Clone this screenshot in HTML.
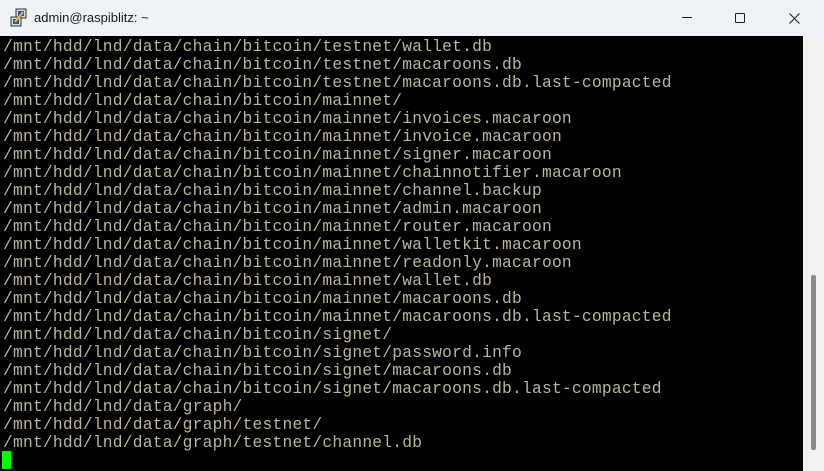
<!DOCTYPE html>
<html><head><style>
body{margin:0;width:824px;height:471px;overflow:hidden;background:#f0f4f9;position:relative;font-family:"Liberation Sans",sans-serif}
#tb{position:absolute;left:0;top:0;width:824px;height:36px;background:#eff3f8}
#title{position:absolute;left:34px;top:10px;font-size:13px;color:#1a1a1a}
#term{position:absolute;left:0;top:36px;width:803px;height:435px;background:#000}
pre{margin:0;position:absolute;left:3px;top:2px;font-family:"Liberation Mono",monospace;font-size:16.27px;line-height:18px;color:#bcb49c;letter-spacing:0.22px}
#cur{position:absolute;left:2px;top:451px;width:9px;height:18px;background:#00ff00}
#sb{position:absolute;left:803px;top:36px;width:21px;height:435px;background:#f2f2f2}
#th{position:absolute;left:811px;top:275px;width:5px;height:175px;background:#8a8a8a;border-radius:2px}
</style></head><body>
<div id="tb">
<svg style="position:absolute;left:10px;top:8px" width="18" height="20" viewBox="0 0 18 20">
<rect x="6" y="1" width="10" height="9" fill="#d8d8e8" stroke="#333"/>
<rect x="8" y="3" width="6" height="5" fill="#3050a0"/>
<rect x="1" y="9" width="10" height="9" fill="#d8d8e8" stroke="#333"/>
<rect x="3" y="11" width="6" height="5" fill="#3050a0"/>
<path d="M5 14 L13 4" stroke="#e8c020" stroke-width="2"/>
</svg>
<div id="title">admin@raspiblitz: ~</div>
<div style="position:absolute;left:682px;top:17px;width:10px;height:1px;background:#222"></div>
<div style="position:absolute;left:735px;top:13px;width:8px;height:8px;border:1px solid #222;border-radius:1px"></div>
<svg style="position:absolute;left:789px;top:13px" width="11" height="11"><path d="M0.5 0.5L10.5 10.5M10.5 0.5L0.5 10.5" stroke="#222" stroke-width="1.1"/></svg>
</div>
<div id="term"><pre>/mnt/hdd/lnd/data/chain/bitcoin/testnet/wallet.db
/mnt/hdd/lnd/data/chain/bitcoin/testnet/macaroons.db
/mnt/hdd/lnd/data/chain/bitcoin/testnet/macaroons.db.last-compacted
/mnt/hdd/lnd/data/chain/bitcoin/mainnet/
/mnt/hdd/lnd/data/chain/bitcoin/mainnet/invoices.macaroon
/mnt/hdd/lnd/data/chain/bitcoin/mainnet/invoice.macaroon
/mnt/hdd/lnd/data/chain/bitcoin/mainnet/signer.macaroon
/mnt/hdd/lnd/data/chain/bitcoin/mainnet/chainnotifier.macaroon
/mnt/hdd/lnd/data/chain/bitcoin/mainnet/channel.backup
/mnt/hdd/lnd/data/chain/bitcoin/mainnet/admin.macaroon
/mnt/hdd/lnd/data/chain/bitcoin/mainnet/router.macaroon
/mnt/hdd/lnd/data/chain/bitcoin/mainnet/walletkit.macaroon
/mnt/hdd/lnd/data/chain/bitcoin/mainnet/readonly.macaroon
/mnt/hdd/lnd/data/chain/bitcoin/mainnet/wallet.db
/mnt/hdd/lnd/data/chain/bitcoin/mainnet/macaroons.db
/mnt/hdd/lnd/data/chain/bitcoin/mainnet/macaroons.db.last-compacted
/mnt/hdd/lnd/data/chain/bitcoin/signet/
/mnt/hdd/lnd/data/chain/bitcoin/signet/password.info
/mnt/hdd/lnd/data/chain/bitcoin/signet/macaroons.db
/mnt/hdd/lnd/data/chain/bitcoin/signet/macaroons.db.last-compacted
/mnt/hdd/lnd/data/graph/
/mnt/hdd/lnd/data/graph/testnet/
/mnt/hdd/lnd/data/graph/testnet/channel.db</pre></div>
<div id="cur"></div>
<div id="sb"></div>
<div id="th"></div>
</body></html>
